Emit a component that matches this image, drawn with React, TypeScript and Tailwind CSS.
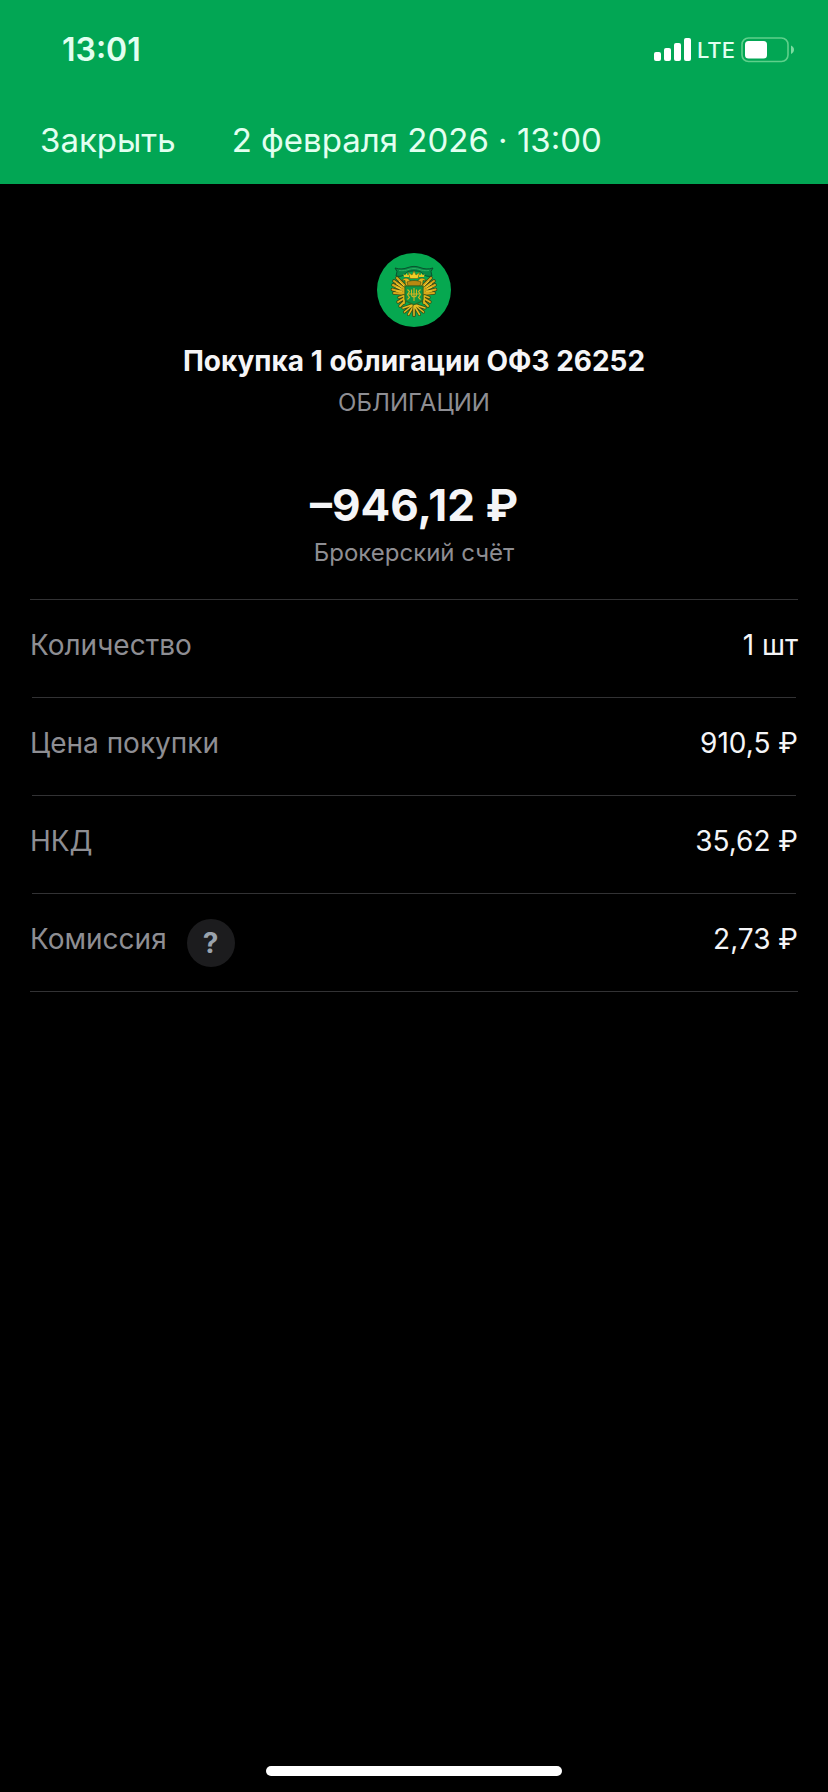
const details = [
  { label: "Количество", value: "1 шт" },
  { label: "Цена покупки", value: "910,5 ₽" },
  { label: "НКД", value: "35,62 ₽" },
  { label: "Комиссия", value: "2,73 ₽", hasHelp: true },
]

function SignalIcon() {
  return (
    <svg width="37" height="24" viewBox="0 0 37 24" fill="#fff" aria-hidden="true">
      <rect x="0" y="14" width="7" height="9" rx="2" />
      <rect x="10" y="10" width="7" height="13" rx="2" />
      <rect x="20" y="5" width="7" height="18" rx="2" />
      <rect x="30" y="0" width="7" height="23" rx="2" />
    </svg>
  )
}

function BatteryIcon() {
  return (
    <svg width="54" height="26" viewBox="0 0 54 26" aria-hidden="true">
      <rect x="1" y="1" width="46" height="23.5" rx="6.5" fill="none" stroke="#5fd08b" strokeWidth="1.6" />
      <rect x="4" y="4" width="22" height="17.5" rx="3.5" fill="#fff" />
      <path d="M50 8.5c1.8.7 3 2.3 3 4.200s-1.200 3.500-3 4.200z" fill="#7bdba0" />
    </svg>
  )
}

/* Double-headed eagle with ribbon, crowns, wings, shield and tail */
function EmblemIcon() {
  return (
    <svg width="74" height="74" viewBox="0 0 74 74" aria-hidden="true">
      <circle cx="37" cy="37" r="37" fill="#06a850" />
      {/* ribbon */}
      <path
        d="M18 15c5 1.500 9 1 13-.5 4-1.500 8-1.500 12 0 4 1.500 8 2 13 .5l-2 3.500 1 4.500c-4 1-7 0-9-2-2-2.500-4-3-9-3s-7 .5-9 3c-2 2-5 3-9 2l1-4.500z"
        fill="#078a45"
        stroke="#0b4a2b"
        strokeWidth=".9"
      />
      <path d="M22 17.500c4 .5 7 0 10-1.200 3.500-1 6.500-1 10 0 3 1.200 6 1.700 10 1.200" fill="none" stroke="#2fae62" strokeWidth="1" />
      <defs>
        <g id="half-eagle">
          {/* upper wing feathers */}
          <path
            d="M29 34L20 25M28 36L17 28M28 38L16 32M28 40L15.500 36.500M28 41L17 40"
            fill="none"
            stroke="#3d4a14"
            strokeWidth="3.600"
            strokeLinecap="round"
          />
          <path
            d="M29 34L20 25M28 36L17 28M28 38L16 32M28 40L15.500 36.500M28 41L17 40"
            fill="none"
            stroke="#d9a91a"
            strokeWidth="2"
            strokeLinecap="round"
          />
          <path d="M22 28l5 5M19 30.500l6 4M19 34l5 2M19 38h6" fill="none" stroke="#f3d433" strokeWidth=".9" />
          {/* lower wing and claws */}
          <path
            d="M26 43l-4 1.500M26 46l-5 3M27 49l-4 4M27 43v7"
            fill="none"
            stroke="#3d4a14"
            strokeWidth="3.400"
            strokeLinecap="round"
          />
          <path
            d="M26 43l-4 1.500M26 46l-5 3M27 49l-4 4M27 43v7"
            fill="none"
            stroke="#e0b51c"
            strokeWidth="1.800"
            strokeLinecap="round"
          />
          {/* head and small crown */}
          <path d="M34 32c0-4-2-7-5-7-2 0-3 1-4 3l3-.5c0 2 0 4 2 6z" fill="#e0b51c" stroke="#3d4a14" strokeWidth=".7" />
          <path d="M27 24l-.5-3 1.800 1.200 1.200-2 1.200 2 1.800-1.200-.5 3z" fill="#e8c625" />
          {/* tail feathers */}
          <path
            d="M35 52l-9 3M36 52l-8.500 7M36.500 53l-5 8.500M37 53v9.500"
            fill="none"
            stroke="#3d4a14"
            strokeWidth="3"
            strokeLinecap="round"
          />
          <path
            d="M35 52l-9 3M36 52l-8.500 7M36.500 53l-5 8.500M37 53v9.500"
            fill="none"
            stroke="#e6be22"
            strokeWidth="1.500"
            strokeLinecap="round"
          />
        </g>
      </defs>
      <use href="#half-eagle" />
      <use href="#half-eagle" transform="matrix(-1 0 0 1 74 0)" />
      {/* central crown */}
      <path d="M30 29c4-2 10-2 14 0l-1 4H31z" fill="#b98810" stroke="#3d4a14" strokeWidth=".6" />
      <path d="M33 25.500l-1.500-6 3.500 2.500 2-4 2 4 3.500-2.500-1.500 6z" fill="#f2cf25" stroke="#7a5c0b" strokeWidth=".6" />
      {/* shield */}
      <path d="M28 33h18v13c0 3-5 4-9 5.500-4-1.500-9-2.500-9-5.500z" fill="#0c9746" stroke="#2b6b22" strokeWidth="1.200" />
      <path
        d="M37 35v13M34.500 36.500v5c0 1.500 1 2.500 2.500 2.500s2.500-1 2.500-2.500v-5M30.500 36.500l2 2-2 3 2 3-2 2M43.500 36.500l-2 2 2 3-2 3 2 2M31 41h12"
        fill="none"
        stroke="#d3b41f"
        strokeWidth="1.100"
      />
    </svg>
  )
}

export default function App() {
  return (
    <div className="flex min-h-screen flex-col bg-black font-['Inter',sans-serif] text-[#f5f5f7]">
      {/* ================= HEADER ================= */}
      <header className="bg-[#02a654] text-[#e2fff0]">
        <div className="flex h-25 items-center justify-between pl-[62px] pr-[33px]">
          <span className="text-[32px] font-semibold leading-10">13:01</span>
          <div className="flex items-center gap-1.5">
            <SignalIcon />
            <span className="text-[22px] font-medium leading-8">LTE</span>
            <BatteryIcon />
          </div>
        </div>
        <div className="flex h-21 items-start gap-14 px-10 pt-5">
          <button type="button" className="text-[33px] leading-10">
            Закрыть
          </button>
          <h1 className="text-[33px] leading-10">2 февраля 2026 · 13:00</h1>
        </div>
      </header>

      {/* ================= OPERATION ================= */}
      <main className="flex-1 px-[30px] pt-[69px]">
        <section className="flex flex-col items-center text-center">
          <EmblemIcon />
          <h2 className="mt-4 text-[28px] font-bold leading-9">Покупка 1 облигации ОФЗ 26252</h2>
          <p className="mt-2 text-2xl leading-8 text-[#8e8e93]">ОБЛИГАЦИИ</p>
          <p className="mt-[62px] text-[44px] font-bold leading-[48px]">–946,12 ₽</p>
          <p className="mt-2 text-2xl leading-8 text-[#8e8e93]">Брокерский счёт</p>
        </section>

        <ul className="mt-[30px] border-y border-[#323234]">
          {details.map((item) => (
            <li
              key={item.label}
              className="after:mx-0.5 after:block after:h-px after:bg-[#323234] last:after:hidden"
            >
              <div className="flex items-start justify-between pb-[34px] pt-[27px] text-[28px] leading-9">
                <div className="flex items-start gap-5 text-[#8e8e93]">
                  <span>{item.label}</span>
                  {item.hasHelp && (
                    <button
                      type="button"
                      aria-label="Подробнее о комиссии"
                      className="-mb-2.5 -mt-0.5 flex size-12 items-center justify-center rounded-full bg-[#1c1c1e] font-bold text-[#9aa3ad]"
                    >
                      ?
                    </button>
                  )}
                </div>
                <span>{item.value}</span>
              </div>
            </li>
          ))}
        </ul>
      </main>

      {/* ================= HOME INDICATOR ================= */}
      <footer className="flex justify-center pb-4">
        <div className="h-2.5 w-[296px] rounded-full bg-white" />
      </footer>
    </div>
  )
}
